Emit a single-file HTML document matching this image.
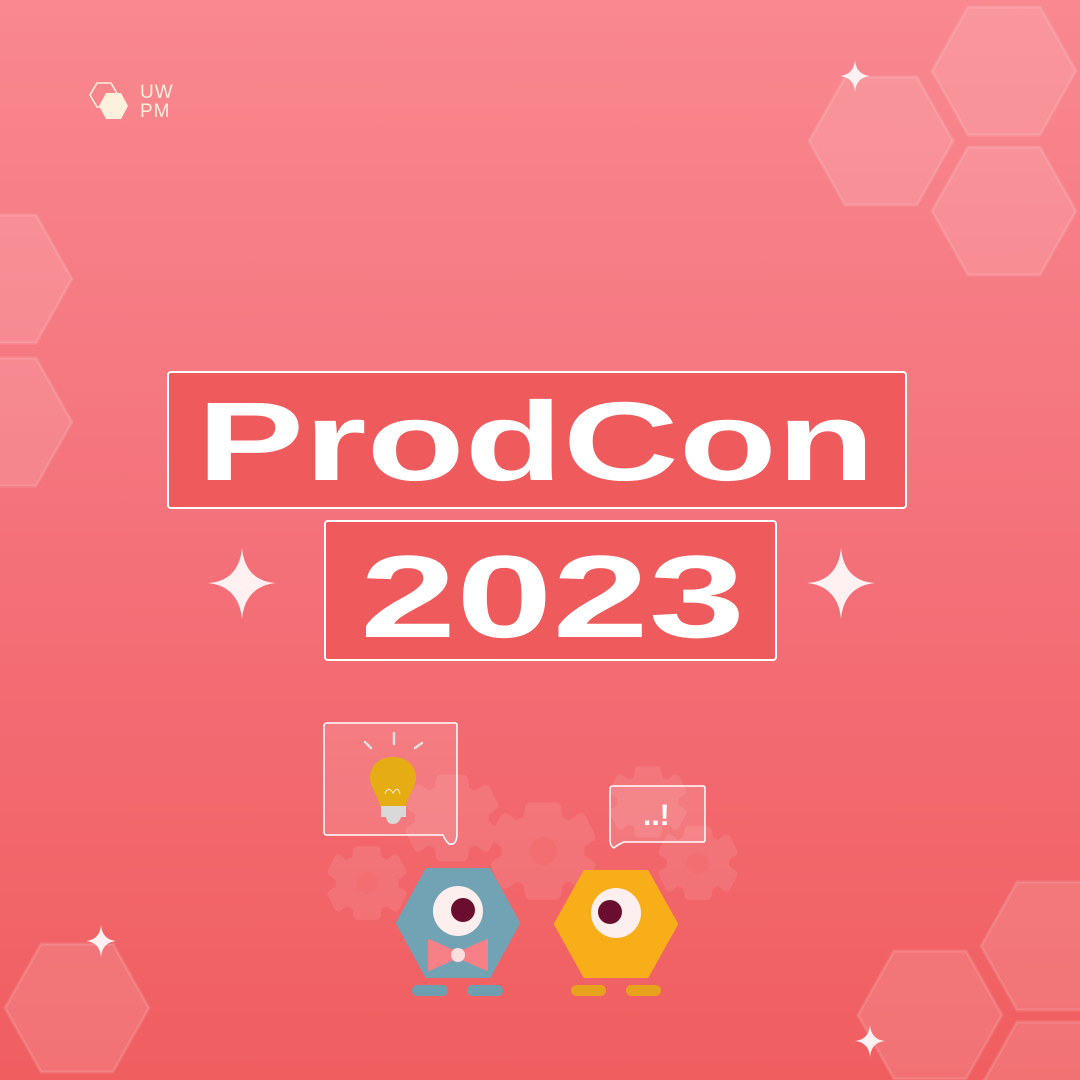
<!DOCTYPE html>
<html><head><meta charset="utf-8"><style>
html,body{margin:0;padding:0;width:1080px;height:1080px;overflow:hidden}
body{background:linear-gradient(180deg,#f98890 0%,#f4717a 50%,#f05e60 100%);font-family:"Liberation Sans",sans-serif;position:relative}
svg{position:absolute;left:0;top:0;display:block}
</style></head><body>
<svg width="1080" height="1080" viewBox="0 0 1080 1080">
<defs>
<g id="hx"><polygon points="-72,0 -36,-64 36,-64 72,0 36,64 -36,64" stroke-linejoin="round"/></g>
<g id="gear"><path d="M-14,-48 L14,-48 L16,-34 L30,-27 L42,-36 L52,-16 L40,-8 L40,8 L52,16 L42,36 L30,27 L16,34 L14,48 L-14,48 L-16,34 L-30,27 L-42,36 L-52,16 L-40,8 L-40,-8 L-52,-16 L-42,-36 L-30,-27 L-16,-34Z"/></g>
</defs>
<g fill="#ffffff" fill-opacity="0.13" stroke="#ffffff" stroke-opacity="0.12" stroke-width="3">
<use href="#hx" transform="translate(881,141)"/>
<use href="#hx" transform="translate(1004,71)"/>
<use href="#hx" transform="translate(1004,211)"/>
<use href="#hx" transform="translate(0,279)"/>
<use href="#hx" transform="translate(0,422)"/>
<use href="#hx" transform="translate(77,1008)"/>
<use href="#hx" transform="translate(930,1015)"/>
<use href="#hx" transform="translate(1053,946)"/>
<use href="#hx" transform="translate(1053,1086)"/>
</g>
<g fill="#fff1f1">
<path d="M242,548 C244,570 256,582 276,583 C256,585 244,597 242,619 C240,597 228,585 208,583 C228,582 240,570 242,548Z"/>
<path d="M841,548 C843,570 855,582 875,583 C855,585 843,597 841,619 C839,597 827,585 807,583 C827,582 839,570 841,548Z"/>
<path d="M855,60 C856,70 861,75 870,76 C861,77 856,82 855,92 C854,82 849,77 840,76 C849,75 854,70 855,60Z"/>
<path d="M101,925 C102,935 107,940 116,941 C107,942 102,947 101,957 C100,947 95,942 86,941 C95,940 100,935 101,925Z"/>
<path d="M870,1025 C871,1035 876,1040 885,1041 C876,1042 871,1047 870,1057 C869,1047 864,1042 855,1041 C864,1040 869,1035 870,1025Z"/>
</g>
<!-- logo -->
<g stroke="#fdf0dc" stroke-width="1.6" fill="none"><polygon points="90,95 97,83 111,83 118,95 111,107 97,107"/></g>
<polygon points="99,106 106,93 121,93 128,106 121,119 106,119" fill="#fdf0dc"/>
<text x="140" y="98" font-size="19" fill="#fdf0dc" letter-spacing="1">UW</text>
<text x="140" y="117" font-size="19" fill="#fdf0dc" letter-spacing="1">PM</text>
<!-- title -->
<rect x="168" y="372" width="738" height="136" rx="3" fill="#ef5b5d" stroke="#fff" stroke-width="2"/>
<rect x="325" y="521" width="451" height="139" rx="3" fill="#ef5b5d" stroke="#fff" stroke-width="2"/>
<text x="197" y="480" font-size="112" font-weight="bold" fill="#fff" textLength="678" lengthAdjust="spacingAndGlyphs">ProdCon</text>
<text x="360" y="637" font-size="117" font-weight="bold" fill="#fff" textLength="385" lengthAdjust="spacingAndGlyphs">2023</text>
<!-- gears -->
<g opacity="0.09" fill="#ffffff" stroke="#ffffff" stroke-width="12" stroke-linejoin="round">
<use href="#gear" transform="translate(367,883) scale(0.68)"/>
<use href="#gear" transform="translate(452,818) scale(0.8)"/>
<use href="#gear" transform="translate(543,851) scale(0.9)"/>
<use href="#gear" transform="translate(648,802) scale(0.66)"/>
<use href="#gear" transform="translate(698,863) scale(0.68)"/>
</g>
<g fill="#f26a6c" opacity="0.6">
<circle cx="367" cy="883" r="11"/><circle cx="543" cy="851" r="14"/><circle cx="698" cy="863" r="11"/>
</g>
<!-- bubble 1 -->
<path d="M327,723 H455 Q457,723 457,725 V833 Q457,846 449,844 Q445,840 443,835 H327 Q324,835 324,832 V726 Q324,723 327,723Z" fill="#fff" fill-opacity="0.12" stroke="#fff" stroke-width="1.5"/>
<g stroke="#e0e0e0" stroke-width="2.5" stroke-linecap="round"><line x1="394" y1="733" x2="394" y2="744"/><line x1="365" y1="742" x2="371" y2="748"/><line x1="422" y1="743" x2="415" y2="748"/></g>
<path d="M393,757 C406,757 416,765 416,778 C416,787 409,793 406,806 H380 C377,793 370,787 370,778 C370,765 380,757 393,757Z" fill="#e6ac13"/>
<path d="M385,794 Q388,785 393,793 Q398,785 400,794" fill="none" stroke="#fff" stroke-width="0.8"/>
<rect x="381" y="806" width="25" height="11" fill="#d9d9d9"/>
<path d="M386,817 H401 Q399,824 393,824 Q387,824 386,817Z" fill="#d9d9d9"/>
<!-- bubble 2 -->
<path d="M613,786 H703 Q705,786 705,788 V840 Q705,842 703,842 H624 Q617,845 614,848 Q610,846 610,840 V789 Q610,786 613,786Z" fill="#fff" fill-opacity="0.12" stroke="#fff" stroke-width="1.5"/>
<text x="643" y="825" font-size="30" font-weight="bold" fill="#fff">..!</text>
<!-- blue character -->
<polygon points="398,923 427,870 489,870 518,923 489,976 427,976" fill="#72a3b5" stroke="#72a3b5" stroke-width="4" stroke-linejoin="round"/>
<circle cx="458" cy="911" r="25" fill="#fcefee"/>
<circle cx="463" cy="910" r="12" fill="#6b0d2f"/>
<path d="M429,940 L456,952 L460,952 L487,940 L487,970 L460,958 L456,958 L429,970Z" fill="#f77f86" stroke="#f77f86" stroke-linejoin="round" stroke-width="2"/>
<circle cx="458" cy="955" r="7" fill="#fcdede"/>
<rect x="412" y="985" width="36" height="11" rx="5.5" fill="#6e9fb0"/>
<rect x="467" y="985" width="36" height="11" rx="5.5" fill="#6e9fb0"/>
<!-- yellow character -->
<polygon points="556,924 585,872 647,872 676,924 647,976 585,976" fill="#f8ae18" stroke="#f8ae18" stroke-width="4" stroke-linejoin="round"/>
<circle cx="616" cy="913" r="25" fill="#fcefee"/>
<circle cx="610" cy="912" r="12" fill="#6b0d2f"/>
<rect x="571" y="985" width="35" height="11" rx="5.5" fill="#e8a11d"/>
<rect x="626" y="985" width="35" height="11" rx="5.5" fill="#e8a11d"/>
</svg>
</body></html>
